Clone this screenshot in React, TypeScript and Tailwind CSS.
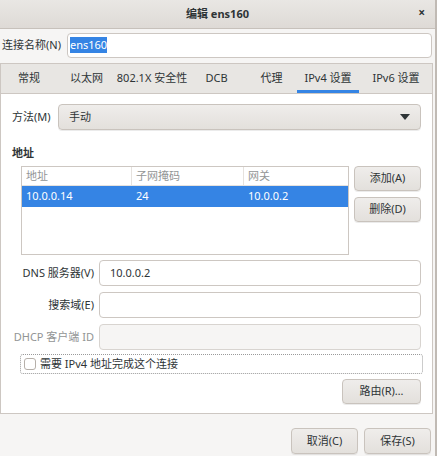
import React from "react";

const font = "font-['Noto_Sans','Noto_Sans_CJK_SC',sans-serif]";

const btn =
  "flex items-center justify-center rounded-[4px] border border-[#c9c3bd] bg-gradient-to-b from-[#efedeb] to-[#e3e0dc] shadow-[0_1px_0_rgba(0,0,0,0.08)] text-[#2e3436] text-[11px] whitespace-nowrap";

const entry =
  "h-[26px] rounded-[4px] border border-[#cdc7c2] bg-white flex items-center px-[10px] text-[11px] text-[#2e3436]";

const tabs = [
  { label: "常规", w: "w-[54px]" },
  { label: "以太网", w: "w-[61px]" },
  { label: "802.1X 安全性", w: "w-[70px]" },
  { label: "DCB", w: "w-[59px]" },
  { label: "代理", w: "w-[51px]" },
  { label: "IPv4 设置", w: "w-[62px]", active: true },
  { label: "IPv6 设置", w: "w-[74px]" },
];

function TitleBar() {
  return (
    <div className="relative h-[29px] flex items-center justify-center bg-gradient-to-b from-[#e9e7e4] to-[#dedad6] border-b border-[#c7c1bb]">
      <span className="text-[11px] font-bold text-[#2e3436]">编辑 ens160</span>
      <span className="absolute right-[10px] top-[7px] text-[12px] font-bold text-[#2e3436] leading-none">
        ×
      </span>
    </div>
  );
}

function Tabs() {
  return (
    <div className="flex h-[30px] bg-[#e8e6e3] border-b border-[#cdc7c2] pl-[1px]">
      {tabs.map((t) => (
        <div
          key={t.label}
          className={`${t.w} shrink-0 relative flex items-center justify-center whitespace-nowrap text-[11px] text-[#2e3436]`}
        >
          {t.label}
          {t.active && (
            <div className="absolute left-0 right-0 bottom-[0px] h-[3px] bg-[#3584e4]" />
          )}
        </div>
      ))}
    </div>
  );
}

function AddressTable() {
  return (
    <div className="w-[329px] h-[89px] border border-[#cdc7c2] bg-white flex flex-col">
      <div className="flex h-[19px] border-b border-[#e6e2de] text-[11px] text-[#929595]">
        <div className="w-[110px] pl-[4px] flex items-center border-r border-[#e6e2de]">地址</div>
        <div className="w-[112px] pl-[4px] flex items-center border-r border-[#e6e2de]">子网掩码</div>
        <div className="flex-1 pl-[4px] flex items-center">网关</div>
      </div>
      <div className="flex h-[21px] bg-[#3584e4] text-[11px] text-white">
        <div className="w-[110px] pl-[4px] flex items-center">10.0.0.14</div>
        <div className="w-[112px] pl-[4px] flex items-center">24</div>
        <div className="flex-1 pl-[4px] flex items-center">10.0.0.2</div>
      </div>
    </div>
  );
}

function Page() {
  return (
    <div className="bg-white h-[319px] pl-[11px] pr-[11px] pt-[10px] flex flex-col">
      <div className="flex items-center h-[26px]">
        <span className="w-[46px] text-[11px] text-[#2e3436]">方法(M)</span>
        <div className={`${btn} flex-1 h-[26px] !justify-between px-[10px]`}>
          <span>手动</span>
          <svg width="10" height="6" viewBox="0 0 10 6">
            <path d="M0 0 L10 0 L5 6 Z" fill="#2e3436" />
          </svg>
        </div>
      </div>
      <div className="mt-[16px] text-[11px] font-bold text-[#2e3436] leading-[14px]">地址</div>
      <div className="mt-[6px] pl-[9px] flex gap-[5px]">
        <AddressTable />
        <div className="flex flex-col gap-[6px]">
          <div className={`${btn} w-[67px] h-[25px]`}>添加(A)</div>
          <div className={`${btn} w-[67px] h-[25px]`}>删除(D)</div>
        </div>
      </div>
      <div className="mt-[5px] grid grid-cols-[82px_1fr] gap-x-[5px] gap-y-[6px] items-center">
        <span className="text-right text-[11px] text-[#2e3436] whitespace-nowrap">DNS 服务器(V)</span>
        <div className={entry}>10.0.0.2</div>
        <span className="text-right text-[11px] text-[#2e3436]">搜索域(E)</span>
        <div className={entry}></div>
        <span className="text-right text-[11px] text-[#929595] whitespace-nowrap">DHCP 客户端 ID</span>
        <div className={`${entry} !bg-[#f6f5f4] !border-[#d8d4d0]`}></div>
      </div>
      <div className="mt-[4px] ml-[8px] mr-[-2px] h-[20px] border border-dotted border-[#9a9a9a] rounded-[3px] flex items-center pl-[3px] gap-[4px]">
        <div className="w-[12px] h-[12px] border border-[#b6b0aa] rounded-[3px] bg-white" />
        <span className="text-[11px] text-[#2e3436]">需要 IPv4 地址完成这个连接</span>
      </div>
      <div className="mt-[5px] flex justify-end">
        <div className={`${btn} w-[79px] h-[25px]`}>路由(R)…</div>
      </div>
    </div>
  );
}

export default function App() {
  return (
    <div className={`${font} w-[437px] h-[456px] bg-[#f6f5f4] border-r-2 border-[#c0bab4] overflow-hidden`}>
      <TitleBar />
      <div className="flex items-center h-[26px] mt-[3px] pr-[3px]">
        <span className="pl-[2px] w-[67px] text-[11px] text-[#2e3436] whitespace-nowrap">连接名称(N)</span>
        <div className={`${entry} flex-1 !h-[25px] !px-[2px]`}>
          <span className="bg-[#3584e4] text-white">ens160</span>
        </div>
      </div>
      <div className="mt-[5px] w-[433px] border border-[#cdc7c2] flex flex-col">
        <Tabs />
        <Page />
      </div>
      <div className="flex justify-end gap-[6px] pr-[4px] mt-[14px]">
        <div className={`${btn} w-[67px] h-[26px]`}>取消(C)</div>
        <div className={`${btn} w-[67px] h-[26px]`}>保存(S)</div>
      </div>
    </div>
  );
}
